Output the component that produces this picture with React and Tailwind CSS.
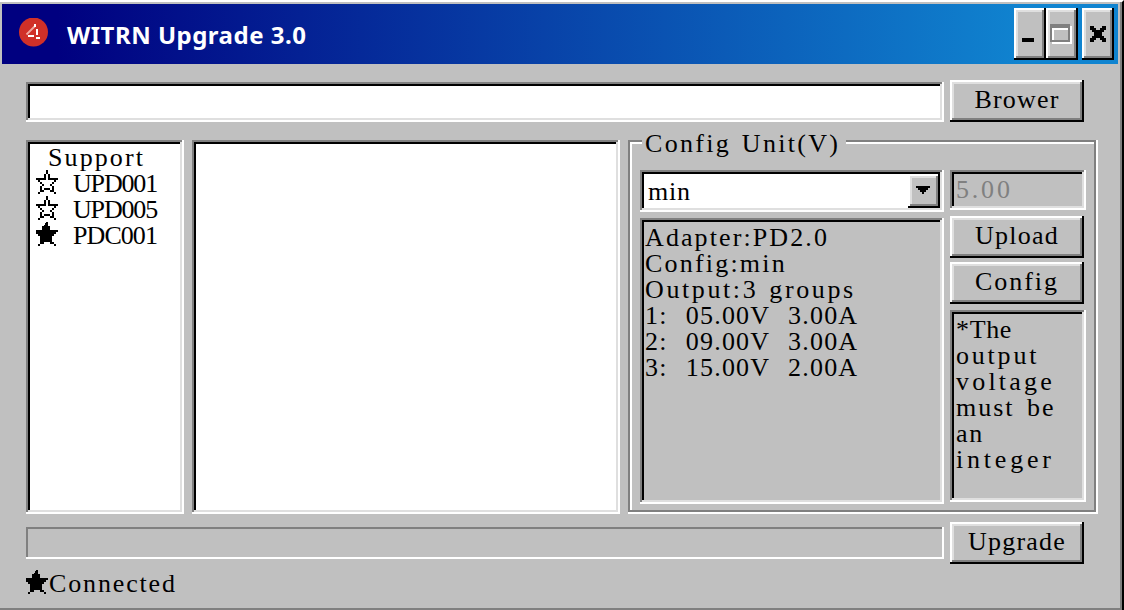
const SUNKEN =
  "shadow-[inset_-2px_-2px_0_#fff,inset_2px_2px_0_#808080,inset_-4px_-4px_0_#dfdfdf,inset_4px_4px_0_#000]";
const RAISED =
  "shadow-[inset_-2px_-2px_0_#000,inset_2px_2px_0_#fff,inset_-4px_-4px_0_#808080,inset_4px_4px_0_#dfdfdf]";

function Sunken({ className = "", children }) {
  return <div className={`${SUNKEN} ${className}`}>{children}</div>;
}

function Button({ className = "", children }) {
  return (
    <button
      className={`flex h-[42px] w-[134px] shrink-0 items-center justify-center bg-[#c0c0c0] pb-0.5 whitespace-pre ${RAISED} ${className}`}
    >
      {children}
    </button>
  );
}

// Stars are drawn on an 11 x 12 grid of 2px cells.
const STAR_OUTLINE =
  "M5 0h1v2h-1z M4 2h1v2h-1z M6 2h1v2h-1z M0 4h5v1h-5z M6 4h5v1h-5z M1 5h1v1h-1z M9 5h1v1h-1z M2 6h1v1h-1z M8 6h1v1h-1z M3 7h1v1h-1z M7 7h1v1h-1z M2 8h1v2h-1z M8 8h1v2h-1z M4 9h3v1h-3z M2 10h2v1h-2z M7 10h2v1h-2z M1 11h1v1h-1z M9 11h1v1h-1z";
const STAR_FILLED =
  "M5 0h1v2h1v2h4v1h-1v1h-1v1h-1v3h1v1h-2v-1h-3v1h-2v-1h0v-3h-1v-1h-1v-1h-1v-1h4v-2h1z M1 11h1v1h-1z M9 11h1v1h-1z";

function Star({ filled }) {
  return (
    <svg width="24" height="26" viewBox="0 0 12 13" className="shrink-0" shapeRendering="crispEdges">
      <path d={filled ? STAR_FILLED : STAR_OUTLINE} />
    </svg>
  );
}

function Device({ filled, children, className }) {
  return (
    <li className="flex h-[26px]">
      <Star filled={filled} />
      <span className={`ml-[13px] pt-px ${className}`}>{children}</span>
    </li>
  );
}

function TitleBar() {
  return (
    <header className="flex h-[60px] items-center bg-linear-to-r/srgb from-[#000080] from-5% to-[#1084d0] to-92% pr-1 pl-4">
      <svg width="32" height="32" viewBox="0 0 32 32">
        <circle cx="15.5" cy="14" r="14.5" fill="#d03028" />
        <path d="M8.5 16.5 L17 8" stroke="#f0a8a0" strokeWidth="1.8" fill="none" />
        <path d="M16 6h2v3h-2z M18 11h2v6h-2z M10 17h6v2h-6z M18 19h4v2h-4z" fill="#fff" />
      </svg>
      <h1 className="ml-[17px] flex-1 pt-0.5 font-['Noto_Sans',sans-serif] text-[24px] leading-[30px] font-bold tracking-[0.5px] whitespace-pre text-white">
        WITRN Upgrade 3.0
      </h1>
      <div className="flex">
        <button aria-label="Minimize" className={`h-[52px] w-8 bg-[#c0c0c0] ${RAISED}`}>
          <svg width="32" height="52" shapeRendering="crispEdges">
            <path d="M8 30h12v4H8z" />
          </svg>
        </button>
        <button aria-label="Maximize" className={`h-[52px] w-8 bg-[#c0c0c0] ${RAISED}`}>
          <svg width="32" height="52" shapeRendering="crispEdges">
            <path d="M6 18h20v18H6z" fill="#fff" />
            <path d="M4 16h20v18H4z" fill="#808080" />
            <path d="M6 20h16v12H6z" fill="#fff" />
            <path d="M8 22h14v10H8z" fill="#c0c0c0" />
          </svg>
        </button>
        <button aria-label="Close" className={`ml-1 h-[52px] w-8 bg-[#c0c0c0] ${RAISED}`}>
          <svg width="32" height="52" shapeRendering="crispEdges">
            <path d="M8 18h4v2h2v2h4v-2h2v-2h4v4h-2v2h-2v4h2v2h2v4h-4v-2h-2v-2h-4v2h-2v2h-4v-4h2v-2h2v-4h-2v-2h-2z" />
          </svg>
        </button>
      </div>
    </header>
  );
}

function ConfigGroup() {
  return (
    <section className="relative h-[374px] w-[470px] pt-[30px] pl-3 shadow-[inset_-2px_-2px_0_#fff,inset_2px_2px_0_#808080,inset_-4px_-4px_0_#808080,inset_4px_4px_0_#fff]">
      <h2 className="absolute -top-[9px] left-[14px] h-[26px] w-[204px] bg-[#c0c0c0] pl-[3px] tracking-[2.3px] whitespace-pre [word-spacing:2px]">
        Config Unit(V)
      </h2>
      <div className="flex gap-1.5">
        <div className="flex flex-col gap-1.5">
          <Sunken className="flex h-[42px] w-[304px] items-center justify-between bg-white p-1">
            <span className="pt-0.5 pl-1 tracking-[0.8px]">min</span>
            <button aria-label="Open list" className={`h-[34px] w-8 bg-[#c0c0c0] ${RAISED}`}>
              <svg width="32" height="34" shapeRendering="crispEdges">
                <path d="M8 12h14v2h-2v2h-2v2h-2v2h-2v-2h-2v-2h-2v-2H8z" />
              </svg>
            </button>
          </Sunken>
          <Sunken className="h-[286px] w-[304px] pt-[7px] pl-[5px] whitespace-pre">
            <p className="tracking-[2.1px]">Adapter:PD2.0</p>
            <p className="tracking-[2.2px]">Config:min</p>
            <p className="tracking-[2.6px] [word-spacing:2px]">Output:3 groups</p>
            <p className="tracking-[1.2px] [word-spacing:10.5px]">1: 05.00V 3.00A</p>
            <p className="tracking-[1.2px] [word-spacing:10.5px]">2: 09.00V 3.00A</p>
            <p className="tracking-[1.2px] [word-spacing:10.5px]">3: 15.00V 2.00A</p>
          </Sunken>
        </div>
        <div className="flex flex-col">
          <Sunken className="h-10 w-[136px] pt-[7px] pl-[6px] tracking-[2.8px] text-[#808080]">5.00</Sunken>
          <Button className="mt-1.5 tracking-[1.24px]">Upload</Button>
          <Button className="mt-1 tracking-[1.96px]">Config</Button>
          <Sunken className="mt-1.5 h-48 w-[136px] pt-[7px] pl-[6px] whitespace-pre">
            <p className="tracking-[0.64px]">*The</p>
            <p className="tracking-[2.8px]">output</p>
            <p className="tracking-[3.2px]">voltage</p>
            <p className="tracking-[2px] [word-spacing:4px]">must be</p>
            <p className="tracking-[1.7px]">an</p>
            <p className="tracking-[3.8px]">integer</p>
          </Sunken>
        </div>
      </div>
    </section>
  );
}

export default function App() {
  return (
    <div className="h-[610px] w-[1124px] overflow-hidden border-t-2 border-r-2 border-t-white border-r-black bg-[#c0c0c0] font-['Liberation_Serif',serif] text-[26px] leading-[26px] text-black">
      <div className="h-[608px] border-r-2 border-b-2 border-[#808080] pt-0.5 pr-0.5 pl-0.5">
        <TitleBar />
        <main className="pl-6">
          <div className="flex items-end gap-1.5 pt-4">
            <Sunken className="h-10 w-[918px] bg-white" />
            <Button className="tracking-[1.2px]">Brower</Button>
          </div>
          <div className="mt-[18px] flex gap-2">
            <Sunken className="h-[374px] w-[158px] bg-white pt-[5px] pl-[10px] whitespace-pre">
              <p className="h-[25px] pl-3 tracking-[2.1px]">Support</p>
              <ul>
                <Device className="tracking-[-1.17px]">UPD001</Device>
                <Device className="tracking-[-1.17px]">UPD005</Device>
                <Device filled className="tracking-[-0.93px]">PDC001</Device>
              </ul>
            </Sunken>
            <Sunken className="h-[374px] w-[428px] bg-white" />
            <ConfigGroup />
          </div>
          <div className="mt-2 flex items-center gap-1.5">
            <div className="h-8 w-[918px] shadow-[inset_-2px_-2px_0_#fff,inset_2px_2px_0_#808080]" />
            <Button className="tracking-[1.2px]">Upgrade</Button>
          </div>
          <footer className="mt-[6px] flex">
            <Star filled />
            <span className="-ml-px pt-px tracking-[1.85px]">Connected</span>
          </footer>
        </main>
      </div>
    </div>
  );
}
